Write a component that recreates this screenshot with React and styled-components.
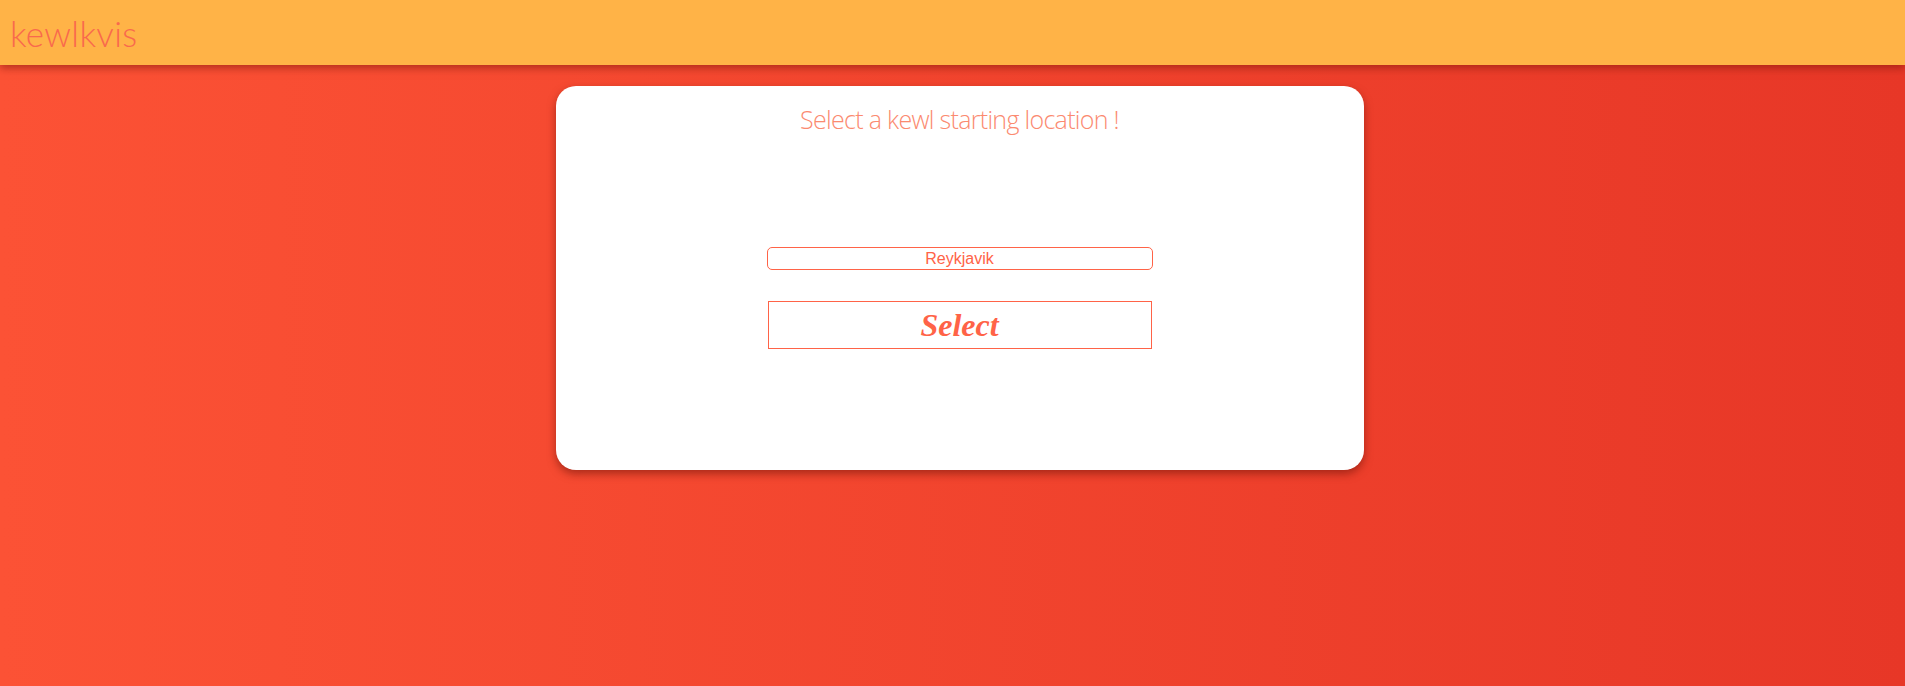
import { useState } from "react";
import styled, { createGlobalStyle } from "styled-components";

const GlobalStyle = createGlobalStyle`
  html, body {
    margin: 0;
    padding: 0;
    min-height: 100%;
  }
  body {
    min-height: 686px;
    background: linear-gradient(90deg, #fc5235 0%, #e73727 100%);
    font-family: "Liberation Sans", Arial, sans-serif;
  }
`;

const App = () => {
  const [city, setCity] = useState("Reykjavik");

  return (
    <Page>
      <GlobalStyle />
      <Header>
        <Logo>kewlkvis</Logo>
      </Header>
      <Main>
        <Card>
          <Title>Select a kewl starting location !</Title>
          <Form onSubmit={(e) => e.preventDefault()}>
            <CityInput
              type="text"
              value={city}
              onChange={(e) => setCity(e.target.value)}
              autoFocus
            />
            <SelectButton type="submit">Select</SelectButton>
          </Form>
        </Card>
      </Main>
    </Page>
  );
};

const Page = styled.div`
  min-height: 686px;
`;

const Header = styled.header`
  height: 65px;
  background-color: #ffb347;
  box-shadow: 0 3px 8px rgba(120, 20, 10, 0.55);
  display: flex;
  align-items: center;
  padding-left: 10px;
  position: relative;
  z-index: 1;
`;

const Logo = styled.h1`
  margin: 0;
  font-family: "Lato", "Open Sans", sans-serif;
  font-weight: 300;
  font-size: 35px;
  letter-spacing: 0.3px;
  color: #f9694d;
`;

const Main = styled.main`
  display: flex;
  justify-content: center;
  padding-top: 21px;
  padding-left: 14px;
`;

const Card = styled.section`
  width: 808px;
  height: 384px;
  box-sizing: border-box;
  background: #fff;
  border-radius: 20px;
  box-shadow: 0 4px 8px rgba(110, 20, 10, 0.55);
  display: flex;
  flex-direction: column;
  align-items: center;
  padding-top: 16px;
`;

const Title = styled.h2`
  margin: 0;
  font-family: "Open Sans", sans-serif;
  font-weight: 300;
  font-size: 25px;
  letter-spacing: -0.7px;
  color: #fb8a70;
`;

const Form = styled.form`
  display: flex;
  flex-direction: column;
  align-items: center;
  margin-top: 111px;
  gap: 31px;
`;

const CityInput = styled.input`
  width: 386px;
  height: 23px;
  box-sizing: border-box;
  border: 1px solid #ff6347;
  border-radius: 5px;
  outline: none;
  text-align: center;
  font-family: "Liberation Sans", Arial, sans-serif;
  font-size: 16px;
  color: #ff6347;
  caret-color: #ff6347;
  padding: 0;
`;

const SelectButton = styled.button`
  width: 384px;
  height: 48px;
  box-sizing: border-box;
  border: 1px solid #ff6347;
  border-radius: 0;
  background: #fff;
  color: #ff6347;
  font-family: "Liberation Serif", "DejaVu Serif", serif;
  font-style: italic;
  font-weight: 700;
  font-size: 32px;
  cursor: pointer;
`;

export default App;
